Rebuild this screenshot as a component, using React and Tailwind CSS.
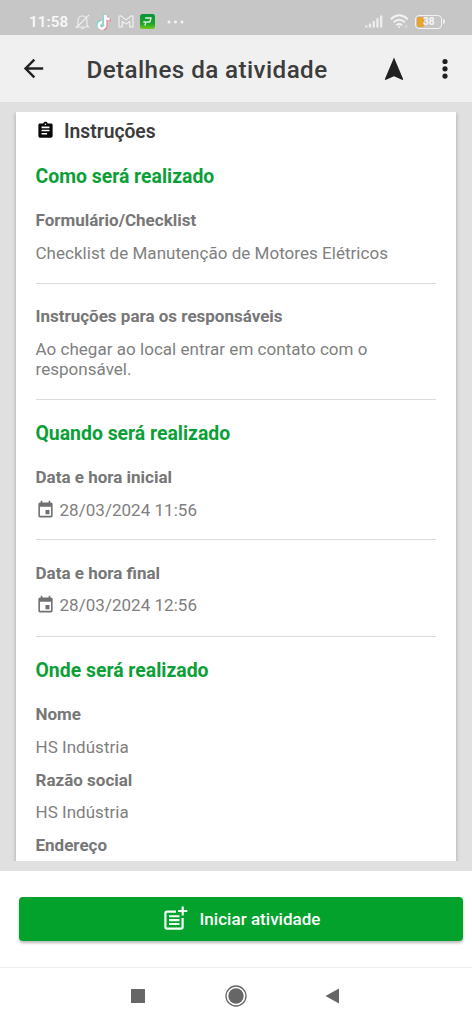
import React from "react";

const Heading = ({ children, className = "" }) => (
  <h2 className={`flex h-[44px] items-center text-[19.4px] font-bold text-[#0b9f37] ${className}`}>
    <span>{children}</span>
  </h2>
);

const Label = ({ children, className = "" }) => (
  <div className={`flex h-[44px] items-center text-[17px] font-bold text-[#777777] ${className}`}>
    <span>{children}</span>
  </div>
);

const Value = ({ children, className = "" }) => (
  <div className={`flex h-[22px] items-center text-[17px] tracking-[0.03px] text-[#808080] ${className}`}>{children}</div>
);

const Rule = ({ className = "" }) => <div className={`h-px shrink-0 bg-[#dcdcdc] ${className}`} />;

const CalendarIcon = () => (
  <svg className="mr-[5px] h-[20px] w-[19px] -translate-y-px" viewBox="0 0 24 24" preserveAspectRatio="none" fill="#707070">
    <path d="M17 12h-5v5h5v-5zM16 1v2H8V1H6v2H5c-1.11 0-1.99.9-1.99 2L3 19c0 1.1.89 2 2 2h14c1.1 0 2-.9 2-2V5c0-1.1-.9-2-2-2h-1V1h-2zm3 18H5V8h14v11z" />
  </svg>
);

function StatusBar() {
  return (
    <div className="flex h-[35px] shrink-0 items-center bg-[#c6c6c6] pt-[8px] pr-[27px] pl-[29px]">
      <span className="w-[46px] whitespace-nowrap pt-px text-[15.2px] font-semibold tracking-[0.1px] text-[#f7f7f7]">11:58</span>
      <svg className="h-[16px] w-[15px]" viewBox="0 0 15 16" fill="none" stroke="#eeeeee" strokeWidth="1.2">
        <path d="M3 11.5V7c0-3 1.5-5 4.5-5S12 4 12 7v4.5l1.5 1.5h-12zM6 14.5h3M1 14 14 1" />
      </svg>
      <svg className="ml-[6px] h-[16px] w-[17px]" viewBox="0 0 17 16">
        <g fill="none" strokeWidth="2.6">
          <path d="M8.2 .5v10.2a3.2 3.2 0 1 1-3.2-3.2M8.2.8c.3 2.5 2 3.9 4.6 3.9" stroke="#65dcd8" />
          <path d="M10.2 1.5v10.7A3.3 3.3 0 0 1 4 13.4M10.2 2.2c.3 2.5 2 3.9 4.6 3.9" stroke="#ed7488" />
          <path d="M9.2 1v10.4a3.2 3.2 0 1 1-3.2-3.2M9.2 1.4c.3 2.5 2 3.9 4.6 3.9" stroke="#ffffff" />
        </g>
      </svg>
      <svg className="ml-[5px] h-[13px] w-[16px]" viewBox="0 0 16 14" preserveAspectRatio="none" fill="none" stroke="#f1f1f1" strokeWidth="1.2" strokeLinejoin="round">
        <path d="M1 12.8V2.2Q1 1 2.2 1h.8l5 4.3L13 1h.8Q15 1 15 2.2v10.6h-3.3V6.8L8 9.8 4.3 6.8v6z" />
      </svg>
      <svg className="ml-[6px] h-[15px] w-[15px]" viewBox="0 0 15 15">
        <defs>
          <linearGradient id="appTile" x1="0" y1="0" x2="0" y2="1">
            <stop offset="0" stopColor="#07953a" />
            <stop offset=".65" stopColor="#1fa22b" />
            <stop offset="1" stopColor="#75cd1c" />
          </linearGradient>
        </defs>
        <rect width="15" height="15" rx="2.5" fill="url(#appTile)" />
        <path d="M5.2 4h5.9l-1.3 4H6.9M3.3 8h2.8L4.8 11.5" fill="none" stroke="#d9f4df" strokeWidth="1.3" strokeLinejoin="round" />
      </svg>
      <svg className="ml-[12px] h-[4px] w-[17px]" viewBox="0 0 17 4" fill="#f5f5f5">
        <circle cx="2" cy="2" r="1.5" /><circle cx="8.5" cy="2" r="1.5" /><circle cx="15" cy="2" r="1.5" />
      </svg>
      <svg className="ml-auto h-[13px] w-[18px]" viewBox="0 0 18 13" fill="#eeeeee">
        <rect x="0" y="10.5" width="2.5" height="2" rx=".8" /><rect x="3.8" y="8.5" width="2.3" height="4" rx=".6" />
        <rect x="7.6" y="6" width="2.3" height="6.5" rx=".6" /><rect x="11.3" y="3.3" width="2.3" height="9.2" rx=".6" />
        <rect x="15" y="0.5" width="2.3" height="12" rx=".6" />
      </svg>
      <svg className="ml-[7px] h-[15px] w-[19px]" viewBox="0 0 19 15" fill="none" stroke="#f2f2f2" strokeWidth="1.9">
        <path d="M.8 5.2Q9.2-2.5 17.7 5.2M3.6 8.3q5.6-5 11.3 0M6.4 11.2q2.8-2.4 5.7 0" />
        <circle cx="9.2" cy="13" r="1" fill="#f2f2f2" stroke="none" />
        <path d="m14.5 11.2 3 3m0-3-3 3" stroke="#dedede" strokeWidth="1" />
      </svg>
      <div className="ml-[6px] flex h-[14px] w-[27px] items-center rounded-[4px] border-[1.5px] border-[#f2f2f2] p-px">
        <div className="h-full w-[7px] shrink-0 rounded-[1px] bg-[#e9a42f]" />
        <span className="-ml-px text-[10px] leading-none font-bold text-[#f6f6f6]">38</span>
      </div>
      <div className="ml-px h-[5px] w-[2px] rounded-r bg-[#eeeeee]" />
    </div>
  );
}

function AppBar() {
  return (
    <header className="flex h-[67px] shrink-0 items-center bg-[#f0f0f0] pr-[22px] pl-[19px]">
      <svg className="h-[29px] w-[29px]" viewBox="0 0 24 24" fill="#222222">
        <path d="M20 11H7.83l5.59-5.59L12 4l-8 8 8 8 1.41-1.41L7.83 13H20v-2z" />
      </svg>
      <h1 className="ml-[38.5px] whitespace-nowrap pt-[4px] text-[24.2px] font-medium tracking-[0.42px] text-[#3c3c3c]">Detalhes da atividade</h1>
      <svg className="ml-auto h-[24px] w-[20px]" viewBox="0 0 20 24" fill="#202020">
        <path d="M10 .5 .8 22.3l.7.7L10 19.3l8.5 3.7.7-.7z" />
      </svg>
      <svg className="ml-[36px] h-[22px] w-[10px]" viewBox="0 0 10 22" fill="#202020">
        <circle cx="5" cy="3.5" r="2.6" /><circle cx="5" cy="10.8" r="2.6" /><circle cx="5" cy="18.1" r="2.6" />
      </svg>
    </header>
  );
}

export default function App() {
  return (
    <div className="flex h-[1024px] w-[472px] flex-col overflow-hidden bg-white font-[Roboto,sans-serif]">
      <StatusBar />
      <AppBar />
      <main className="h-[769px] shrink-0 overflow-hidden bg-[#e0e0e0] px-[16px] py-[10px]">
        <div className="h-[749px] [clip-path:inset(0_-8px)]">
          <section className="flex h-[760px] flex-col bg-white pr-[20px] pl-[19.5px] shadow-[0_1px_4px_rgba(0,0,0,0.28)]">
            <div className="flex h-[39px] items-center text-[19.3px] font-semibold text-[#3c3c3c]">
              <svg className="mr-[9.5px] h-[19px] w-[19px] -translate-y-px" viewBox="0 0 24 24" fill="#080808">
                <path d="M19 3h-4.18C14.4 1.84 13.3 1 12 1s-2.4.84-2.82 2H5c-1.1 0-2 .9-2 2v14c0 1.1.9 2 2 2h14c1.1 0 2-.9 2-2V5c0-1.1-.9-2-2-2zm-7 0c.55 0 1 .45 1 1s-.45 1-1 1-1-.45-1-1 .45-1 1-1zm2 14H7v-2h7v2zm3-4H7v-2h10v2zm0-4H7V7h10v2z" />
              </svg>
              <span className="pt-[2px]">Instruções</span>
            </div>
            <Heading className="mt-[4px]">Como será realizado</Heading>
            <Label>Formulário/Checklist</Label>
            <Value>Checklist de Manutenção de Motores Elétricos</Value>
            <Rule className="mt-[18px]" />
            <Label className="mt-[11px]">Instruções para os responsáveis</Label>
            <p className="h-[41px] text-[17px] leading-[20px] tracking-[0.03px] text-[#808080]">
              Ao chegar ao local entrar em contato com o<br />responsável.
            </p>
            <Rule className="mt-[19px]" />
            <Heading className="mt-[12px]">Quando será realizado</Heading>
            <Label>Data e hora inicial</Label>
            <Value><CalendarIcon />28/03/2024 11:56</Value>
            <Rule className="mt-[17px]" />
            <Label className="mt-[12px]">Data e hora final</Label>
            <Value className="-mt-px"><CalendarIcon />28/03/2024 12:56</Value>
            <Rule className="mt-[19px]" />
            <Heading className="mt-[12px]">Onde será realizado</Heading>
            <Label>Nome</Label>
            <Value>HS Indústria</Value>
            <Label>Razão social</Label>
            <Value className="-mt-px">HS Indústria</Value>
            <Label>Endereço</Label>
          </section>
        </div>
      </main>
      <div className="h-[96px] shrink-0 bg-white pt-[26px] pr-[9.5px] pl-[19px]">
        <button className="flex h-[44px] w-full items-center justify-center rounded-[4px] bg-[#03a22c] pl-[2px] text-[17px] font-medium tracking-[0.02px] text-white shadow-[0_2px_3px_rgba(0,0,0,0.28)]">
          <svg className="mr-[11.5px] h-[26px] w-[25px] -translate-y-px" viewBox="0 0 25 26" fill="none" stroke="#f3fff5" strokeWidth="2.2">
            <path d="M13 6.6H4Q2.4 6.6 2.4 8.2V22Q2.4 23.6 4 23.6h14q1.6 0 1.6-1.6V13M19.7 1.4v9.2M15.1 6h9.2" />
            <path d="M6 11.2h10.5M6 15.1h10.5M6 19h10.5" strokeWidth="2.1" />
          </svg>
          <span className="pt-[2px]">Iniciar atividade</span>
        </button>
      </div>
      <nav className="flex h-[57px] shrink-0 items-center justify-center border-t border-[#ececec] bg-white">
        <svg className="h-[24px] w-[210px]" viewBox="0 0 210 24" fill="#666666">
          <rect x="0" y="5" width="14" height="14" rx=".5" />
          <circle cx="105" cy="12" r="10" fill="none" stroke="#666666" strokeWidth="1.3" />
          <circle cx="105" cy="12" r="7.7" />
          <path d="M194.5 12 208 4.5v15z" />
        </svg>
      </nav>
    </div>
  );
}
